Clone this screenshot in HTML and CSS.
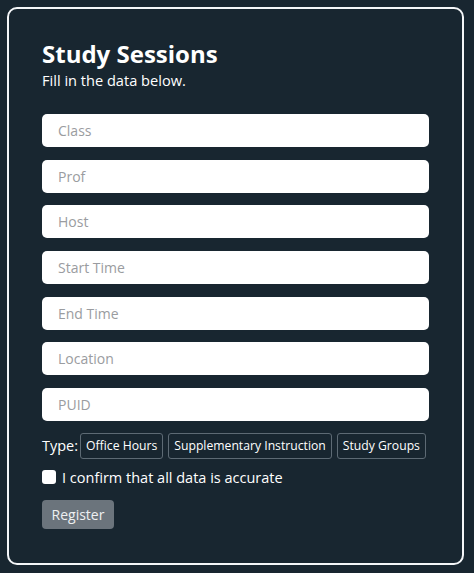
FILE: index.html
```html
<!DOCTYPE html>
<html lang="en">
<head>
    <meta charset="UTF-8">
    <meta name="viewport" content="width=device-width, initial-scale=1.0">
    <title>Study Sessions</title>
    <link rel="stylesheet" href="styles.css">
</head>
<body>
    <div class="card">
        <h1>Study Sessions</h1>
        <p class="subtitle">Fill in the data below.</p>
        <form class="session-form">
            <input type="text" class="field" placeholder="Class">
            <input type="text" class="field" placeholder="Prof">
            <input type="text" class="field" placeholder="Host">
            <input type="text" class="field" placeholder="Start Time">
            <input type="text" class="field" placeholder="End Time">
            <input type="text" class="field" placeholder="Location">
            <input type="text" class="field" placeholder="PUID">
            <div class="type-row">
                <span class="type-label">Type:</span>
                <button type="button" class="type-btn">Office Hours</button>
                <button type="button" class="type-btn">Supplementary Instruction</button>
                <button type="button" class="type-btn">Study Groups</button>
            </div>
            <label class="confirm">
                <span class="box"></span>
                I confirm that all data is accurate
            </label>
            <button type="submit" class="register" disabled>Register</button>
        </form>
    </div>
</body>
</html>
```

FILE: styles.css
```css
* {
    margin: 0;
    padding: 0;
    box-sizing: border-box;
}

body {
    font-family: "Open Sans", sans-serif;
    background-color: #182630;
    color: #ffffff;
    padding: 7px 10px 8px 7px;
}

.card {
    border: 2px solid #f4f6f8;
    border-radius: 10px;
    height: 558px;
    padding: 30px 33px 0 33px;
}

h1 {
    font-size: 24px;
    font-weight: 700;
    line-height: 30px;
}

.subtitle {
    font-size: 14.6px;
    line-height: 18px;
    margin-top: 2px;
    margin-bottom: 25px;
}

.session-form {
    display: flex;
    flex-direction: column;
}

.field {
    height: 33px;
    margin-bottom: 12.7px;
    border: none;
    border-radius: 5px;
    background-color: #ffffff;
    padding: 0 16px;
    font-family: inherit;
    font-size: 14px;
    color: #333;
}

.field::placeholder {
    color: #9a9ca0;
}

.type-row {
    display: flex;
    align-items: center;
    gap: 5px;
    margin-top: -1px;
}

.type-label {
    font-size: 14.5px;
    margin-right: -3px;
}

.type-btn {
    flex: none;
    white-space: nowrap;
    height: 26px;
    padding: 0 5px;
    background: transparent;
    border: 1px solid #5d6a74;
    border-radius: 3px;
    color: #ffffff;
    font-family: inherit;
    font-size: 12.2px;
}

.confirm {
    display: flex;
    align-items: center;
    gap: 6px;
    font-size: 14.5px;
    margin-top: 9px;
}

.box {
    width: 14px;
    height: 14px;
    background-color: #ffffff;
    border-radius: 3px;
}

.register {
    align-self: flex-start;
    margin-top: 13px;
    height: 29px;
    width: 72px;
    border: none;
    border-radius: 4px;
    background-color: #6b747c;
    color: #eef0f2;
    font-family: inherit;
    font-size: 14px;
}
```
